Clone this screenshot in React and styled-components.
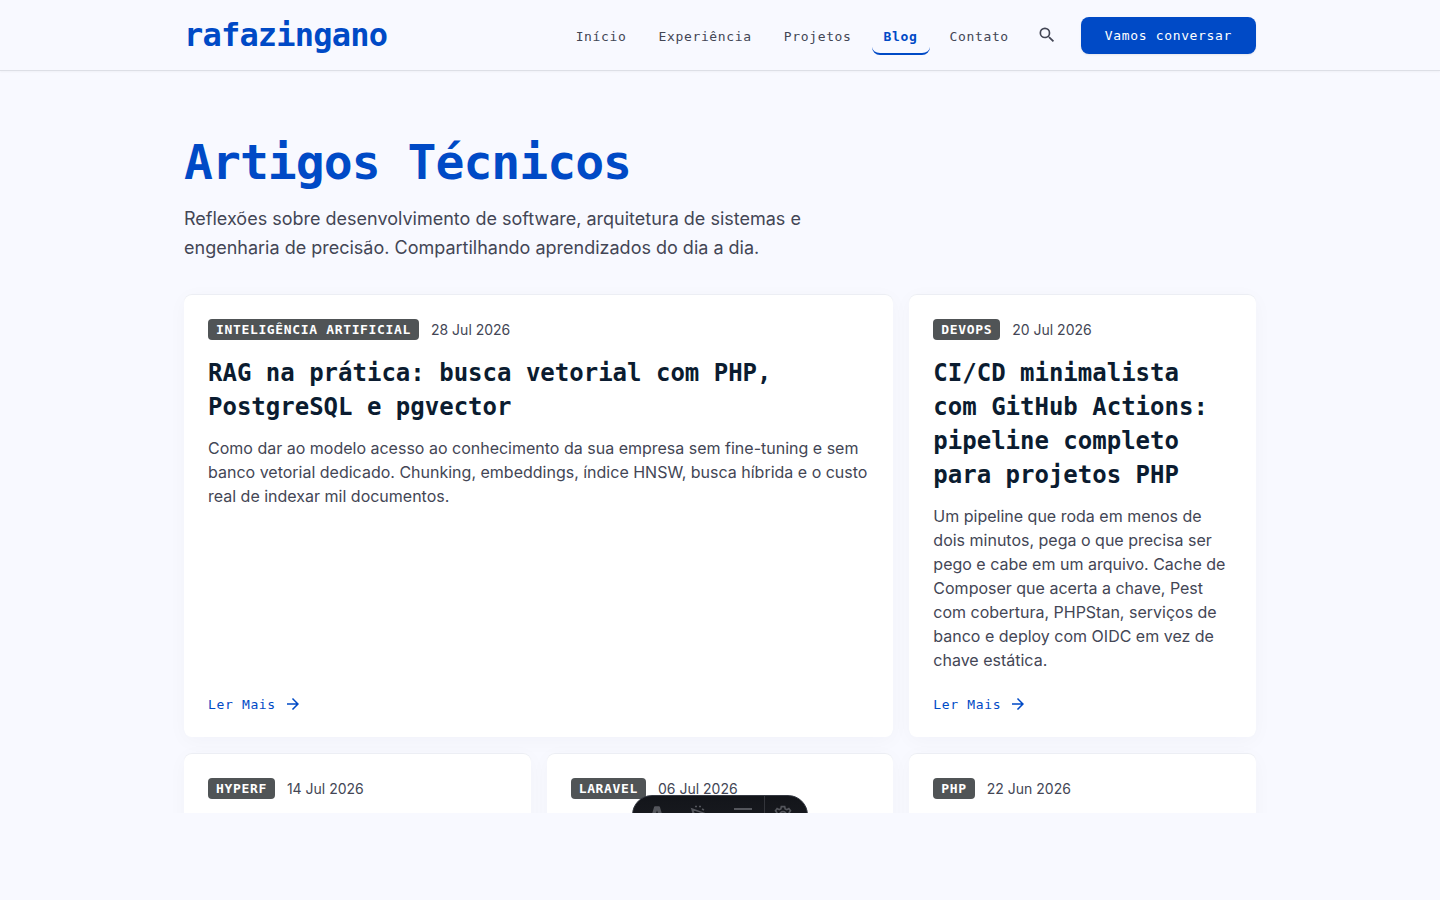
import React from 'react';
import styled, { createGlobalStyle } from 'styled-components';

const mono = '"DejaVu Sans Mono", "Liberation Mono", monospace';
const sans = 'Inter, "Liberation Sans", sans-serif';

const colors = {
  background: '#f8f9ff',
  primary: '#004ac6',
  heading: '#0b1c30',
  text: '#434655',
  badge: '#505456',
  card: '#ffffff',
};

const GlobalStyle = createGlobalStyle`
  * {
    box-sizing: border-box;
  }

  body {
    margin: 0;
    background: ${colors.background};
    color: ${colors.text};
    font-family: ${sans};
  }
`;

const Screen = styled.div`
  position: relative;
  height: calc(100vh - 87px);
  overflow: hidden;
`;

const Header = styled.header`
  border-bottom: 1px solid #dddfe6;
  box-shadow: 0 1px 2px rgba(0, 0, 0, 0.04);
`;

const Container = styled.div`
  max-width: 1120px;
  margin: 0 auto;
  padding: 0 24px;
`;

const HeaderBar = styled(Container)`
  display: flex;
  align-items: center;
  justify-content: space-between;
  height: 70px;
`;

const Logo = styled.a`
  color: ${colors.primary};
  font-family: ${mono};
  font-size: 32px;
  font-weight: 700;
  line-height: 42px;
  letter-spacing: -0.025em;
  text-decoration: none;
`;

const Nav = styled.nav`
  display: flex;
  align-items: center;
  gap: 8px;
`;

const NavLink = styled.a`
  padding: 12px 12px 8px;
  border-bottom: 2px solid ${({ $active }) => ($active ? colors.primary : 'transparent')};
  border-radius: 8px;
  color: ${({ $active }) => ($active ? colors.primary : colors.text)};
  font-family: ${mono};
  font-size: 13px;
  font-weight: ${({ $active }) => ($active ? 700 : 400)};
  line-height: 17px;
  letter-spacing: 0.05em;
  text-decoration: none;
`;

const SearchButton = styled.button`
  display: flex;
  padding: 8px;
  border: 0;
  background: none;
  color: ${colors.text};
`;

const ContactButton = styled.button`
  margin-left: 8px;
  padding: 10px 24px;
  border: 0;
  border-radius: 8px;
  background: ${colors.primary};
  box-shadow: 0 1px 2px rgba(0, 0, 0, 0.08);
  color: #ffffff;
  font-family: ${mono};
  font-size: 13px;
  line-height: 17px;
  letter-spacing: 0.05em;
`;

const Main = styled(Container).attrs({ as: 'main' })`
  padding-top: 64px;
`;

const Title = styled.h1`
  margin: 0 0 14px;
  color: ${colors.primary};
  font-family: ${mono};
  font-size: 48px;
  font-weight: 700;
  line-height: 55px;
  letter-spacing: -0.02em;
`;

const Intro = styled.p`
  max-width: 672px;
  margin: 0 0 32px;
  font-size: 18px;
  line-height: 29px;
`;

const Grid = styled.div`
  display: grid;
  grid-template-columns: repeat(3, 1fr);
  gap: 16px;
`;

const Card = styled.article`
  display: flex;
  flex-direction: column;
  grid-column: span ${({ $wide }) => ($wide ? 2 : 1)};
  padding: 25px 24px 24px;
  border-radius: 8px;
  background: ${colors.card};
  box-shadow: inset 0 1px 0 #eceef4, 0 4px 20px rgba(11, 28, 48, 0.03);
`;

const Meta = styled.div`
  display: flex;
  align-items: center;
  gap: 12px;
  margin-bottom: 16px;
`;

const Badge = styled.span`
  padding: 2px 8px;
  border-radius: 4px;
  background: ${colors.badge};
  color: #ffffff;
  font-family: ${mono};
  font-size: 13px;
  font-weight: 700;
  line-height: 17px;
  letter-spacing: 0.05em;
  text-transform: uppercase;
`;

const PostDate = styled.time`
  font-size: 14px;
  line-height: 20px;
`;

const CardTitle = styled.h2`
  margin: 0 0 12px;
  color: ${colors.heading};
  font-family: ${mono};
  font-size: 24px;
  font-weight: 700;
  line-height: 34px;
`;

const Excerpt = styled.p`
  margin: 0 0 23px;
  font-size: 16px;
  line-height: 24px;
`;

const ReadMore = styled.a`
  display: flex;
  align-items: center;
  gap: 8px;
  margin-top: auto;
  color: ${colors.primary};
  font-family: ${mono};
  font-size: 13px;
  line-height: 17px;
  letter-spacing: 0.05em;
  text-decoration: none;
`;

// dev toolbar, half out of the visible area while it is collapsed
const Toolbar = styled.div`
  position: absolute;
  bottom: -22px;
  left: 50%;
  display: flex;
  height: 40px;
  padding: 0 2px;
  border: 1px solid #343841;
  border-radius: 20px;
  overflow: hidden;
  background: linear-gradient(180deg, #13151a 0%, #1a1c22 100%);
  transform: translateX(-50%);
`;

const ToolbarButton = styled.button`
  display: flex;
  align-items: center;
  justify-content: center;
  width: 43px;
  padding: 0;
  border: 0;
  background: none;
  color: #54565c;

  &:last-child {
    width: 41px;
    padding-right: 4px;
    border-left: 1px solid #33353b;
  }
`;

const SearchIcon = () => (
  <svg width="20" height="20" viewBox="0 0 24 24" fill="currentColor" aria-hidden="true">
    <path d="M15.5 14h-.79l-.28-.27A6.47 6.47 0 0 0 16 9.5 6.5 6.5 0 1 0 9.5 16c1.61 0 3.09-.59 4.23-1.57l.27.28v.79l5 4.99L20.49 19l-4.99-5zm-6 0a4.5 4.5 0 1 1 0-9 4.5 4.5 0 0 1 0 9z" />
  </svg>
);

const ArrowIcon = () => (
  <svg width="18" height="18" viewBox="0 0 24 24" fill="currentColor" aria-hidden="true">
    <path d="m12 4-1.41 1.41L16.17 11H4v2h12.17l-5.58 5.59L12 20l8-8z" />
  </svg>
);

const MenuIcon = () => (
  <svg width="18" height="18" viewBox="0 0 18 18" fill="currentColor">
    <path d="M6 1.200C6.300.4 6.600.2 7.300.2h3.400c.7 0 1 .2 1.300 1L15.500 13.200a15 15 0 0 0-4-1.300L9 4.300 6.500 11.900a15 15 0 0 0-4 1.300z" />
    <path d="M6 13.500c1.500 1.200 4.500 1.200 6 0 .3 2-1.500 2.500-1.500 4-1.500-1-3-.5-3 .5-1.500-1-2-2.500-1.500-4.500z" />
  </svg>
);

const InspectIcon = () => (
  <svg width="20" height="20" viewBox="0 0 20 20" fill="none" stroke="currentColor" strokeWidth="1.5">
    <path d="m2 4 14 5-6 2-2 6zM2 4l3 12" />
    <path d="M5 1.500h2M9 1.500h2M12 4l2 1" />
  </svg>
);

const AuditIcon = () => (
  <svg width="20" height="16" viewBox="0 0 20 16" fill="none" stroke="currentColor" strokeWidth="2">
    <path d="M1 2h18M5 8h14M1 14h18" />
  </svg>
);

const GearIcon = () => (
  <svg width="20" height="20" viewBox="0 0 24 24" fill="none" stroke="currentColor" strokeWidth="2">
    <path d="m10 2-.6 2.700-2 .9L5 4.200 3 7l1.600 2-.7 2L1.500 12l.6 3.400 2.700.5 1.200 2-1 2.600 3 1.800 2.200-1.800h3.600l2.200 1.800 3-1.800-1-2.600 1.200-2 2.700-.5.600-3.400-2.400-1-.7-2L21 7l-2-2.800-2.400 1.400-2-.9L14 2z" />
    <circle cx="12" cy="12" r="4" />
  </svg>
);

const links = ['Início', 'Experiência', 'Projetos', 'Blog', 'Contato'];

const posts = [
  {
    category: 'Inteligência Artificial',
    date: '28 Jul 2026',
    title: 'RAG na prática: busca vetorial com PHP, PostgreSQL e pgvector',
    excerpt:
      'Como dar ao modelo acesso ao conhecimento da sua empresa sem fine-tuning e sem banco vetorial dedicado. Chunking, embeddings, índice HNSW, busca híbrida e o custo real de indexar mil documentos.',
    wide: true,
  },
  {
    category: 'DevOps',
    date: '20 Jul 2026',
    title: 'CI/CD minimalista com GitHub Actions: pipeline completo para projetos PHP',
    excerpt:
      'Um pipeline que roda em menos de dois minutos, pega o que precisa ser pego e cabe em um arquivo. Cache de Composer que acerta a chave, Pest com cobertura, PHPStan, serviços de banco e deploy com OIDC em vez de chave estática.',
  },
  { category: 'Hyperf', date: '14 Jul 2026' },
  { category: 'Laravel', date: '06 Jul 2026' },
  { category: 'PHP', date: '22 Jun 2026' },
];

const PostCard = ({ post }) => (
  <Card $wide={post.wide}>
    <Meta>
      <Badge>{post.category}</Badge>
      <PostDate>{post.date}</PostDate>
    </Meta>
    {post.title && (
      <>
        <CardTitle>{post.title}</CardTitle>
        <Excerpt>{post.excerpt}</Excerpt>
        <ReadMore href="#post">
          Ler Mais
          <ArrowIcon />
        </ReadMore>
      </>
    )}
  </Card>
);

const App = () => (
  <>
    <GlobalStyle />
    <Screen>
      <Header>
        <HeaderBar>
          <Logo href="#home">rafazingano</Logo>
          <Nav>
            {links.map((link) => (
              <NavLink key={link} href={`#${link}`} $active={link === 'Blog'}>
                {link}
              </NavLink>
            ))}
            <SearchButton type="button" aria-label="Buscar">
              <SearchIcon />
            </SearchButton>
            <ContactButton type="button">Vamos conversar</ContactButton>
          </Nav>
        </HeaderBar>
      </Header>
      <Main>
        <Title>Artigos Técnicos</Title>
        <Intro>
          Reflexões sobre desenvolvimento de software, arquitetura de sistemas e engenharia de
          precisão. Compartilhando aprendizados do dia a dia.
        </Intro>
        <Grid>
          {posts.map((post) => (
            <PostCard key={post.category} post={post} />
          ))}
        </Grid>
      </Main>
      <Toolbar>
        <ToolbarButton type="button" aria-label="Menu">
          <MenuIcon />
        </ToolbarButton>
        <ToolbarButton type="button" aria-label="Inspect">
          <InspectIcon />
        </ToolbarButton>
        <ToolbarButton type="button" aria-label="Audit">
          <AuditIcon />
        </ToolbarButton>
        <ToolbarButton type="button" aria-label="Settings">
          <GearIcon />
        </ToolbarButton>
      </Toolbar>
    </Screen>
  </>
);

export default App;
